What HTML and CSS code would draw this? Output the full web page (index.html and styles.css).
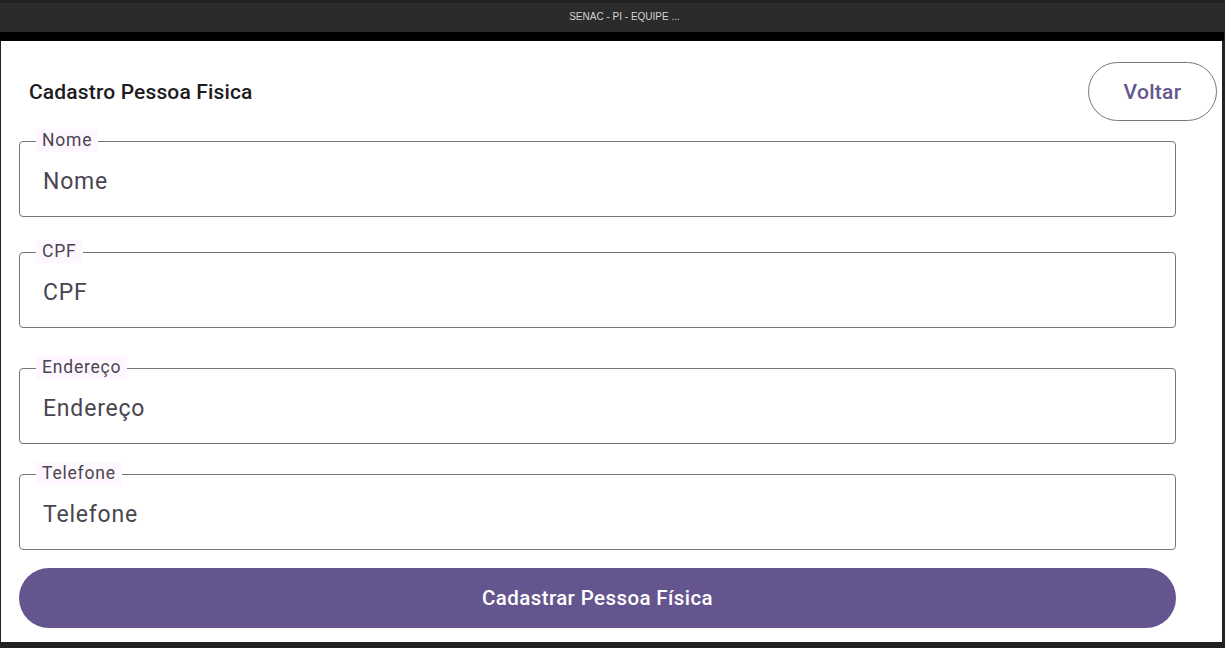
FILE: index.html
```html
<!DOCTYPE html>
<html lang="pt-BR">
<head>
<meta charset="utf-8">
<title>SENAC - PI - EQUIPE ...</title>
<link rel="stylesheet" href="styles.css">
</head>
<body>
<div class="titlebar"><span class="titlebar-text">SENAC - PI - EQUIPE ...</span></div>
<div class="blackbar"></div>
<main class="window">
  <header class="header">
    <h1 class="title">Cadastro Pessoa Fisica</h1>
    <button class="btn-back">Voltar</button>
  </header>
  <form class="form">
    <div class="field f-nome">
      <span class="field-label">Nome</span>
      <span class="field-value">Nome</span>
    </div>
    <div class="field f-cpf">
      <span class="field-label">CPF</span>
      <span class="field-value">CPF</span>
    </div>
    <div class="field f-end">
      <span class="field-label">Endereço</span>
      <span class="field-value">Endereço</span>
    </div>
    <div class="field f-tel">
      <span class="field-label">Telefone</span>
      <span class="field-value">Telefone</span>
    </div>
    <button type="button" class="btn-submit">Cadastrar Pessoa Física</button>
  </form>
</main>
</body>
</html>
```
FILE: styles.css
```css
* { box-sizing: border-box; }
html, body {
  margin: 0;
  padding: 0;
  height: 648px;
  overflow: hidden;
}
body {
  background: #212121;
  font-family: Roboto, "Liberation Sans", sans-serif;
}
.titlebar {
  height: 32px;
  background: #2b2b2b;
  border-top: 3px solid #222222;
  display: flex;
  align-items: center;
  justify-content: center;
}
.titlebar-text {
  font-family: "Liberation Sans", Arial, sans-serif;
  font-size: 10px;
  color: #d4d4d4;
  margin-left: 24px;
  margin-top: -2px;
}
.blackbar {
  height: 9px;
  background: #000;
  margin-right: 1px;
}
.window {
  background: #fff;
  height: 601px;
  margin-left: 1px;
  margin-right: 3px;
  display: flex;
  flex-direction: column;
}
.header {
  margin-top: 21px;
  height: 59px;
  padding-left: 28px;
  padding-right: 5px;
  display: flex;
  align-items: center;
  justify-content: space-between;
}
.title {
  margin: 0;
  font-size: 21px;
  font-weight: 500;
  color: #1d1b20;
  letter-spacing: 0.15px;
}
.btn-back {
  width: 129px;
  height: 59px;
  border: 1px solid #79747e;
  border-radius: 30px;
  background: #fff;
  color: #65558f;
  font-family: Roboto, "Liberation Sans", sans-serif;
  font-size: 21px;
  font-weight: 500;
  letter-spacing: 0.3px;
  padding: 0;
}
.form {
  margin: 0;
  padding-left: 18px;
  width: 1175px;
  display: flex;
  flex-direction: column;
}
.field {
  position: relative;
  height: 76px;
  border: 1px solid #79747e;
  border-radius: 4px;
  display: flex;
  align-items: center;
  padding-left: 23px;
  padding-top: 4px;
}
.f-nome { margin-top: 20px; }
.f-cpf { margin-top: 35px; }
.f-end { margin-top: 40px; }
.f-tel { margin-top: 30px; }
.field-label {
  position: absolute;
  top: -13px;
  left: 16px;
  height: 23px;
  line-height: 23px;
  padding: 0 6px;
  background: #fef7ff;
  color: #49454f;
  font-size: 17.5px;
  letter-spacing: 0.8px;
}
.field-value {
  font-size: 23px;
  color: #49454f;
  letter-spacing: 0.8px;
}
.btn-submit {
  margin-top: 18px;
  height: 60px;
  border: none;
  border-radius: 30px;
  background: #65558f;
  color: #fff;
  font-family: Roboto, "Liberation Sans", sans-serif;
  font-size: 20.5px;
  font-weight: 500;
  letter-spacing: 0.4px;
}
```
